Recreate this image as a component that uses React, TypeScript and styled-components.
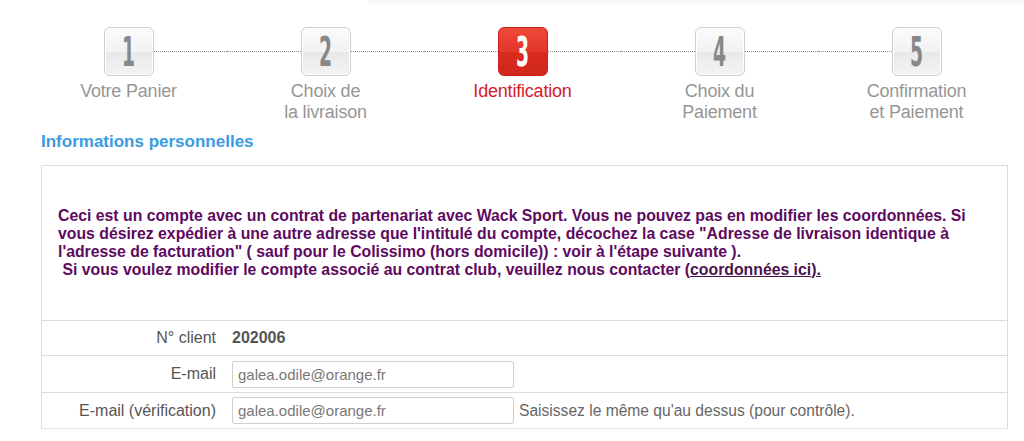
import React from "react";
import styled, { createGlobalStyle } from "styled-components";

const Global = createGlobalStyle`
  html, body { margin: 0; padding: 0; background: #fff; }
  body { font-family: "Liberation Sans", Arial, sans-serif; }
`;

const Page = styled.div`
  width: 1024px;
  height: 441px;
  overflow: hidden;
`;

const TopStrip = styled.div`
  margin-left: 368px;
  height: 4px;
  background: linear-gradient(#f3f3f3, #fafafa);
`;

const Steps = styled.div`
  display: flex;
  padding: 23px 0 0 30px;
`;

const Step = styled.div`
  width: 197px;
  display: flex;
  flex-direction: column;
  align-items: center;
`;

const BoxRow = styled.div`
  width: 100%;
  display: flex;
  align-items: center;
`;

const Connector = styled.div<{ $hidden?: boolean }>`
  flex: 1;
  height: 0;
  border-top: 1px dotted ${(p) => (p.$hidden ? "transparent" : "#8f8f8f")};
`;

const NumBox = styled.div<{ $active?: boolean }>`
  width: 50px;
  height: 49px;
  box-sizing: border-box;
  border-radius: 6px;
  border: 1px solid ${(p) => (p.$active ? "#c8231a" : "#cfcfcf")};
  background: ${(p) =>
    p.$active
      ? "linear-gradient(#ef4a3c 0%, #e2362a 50%, #d92b1e 52%, #d0281c 100%)"
      : "linear-gradient(#fbfbfb 0%, #f2f2f2 50%, #e8e8e8 52%, #f4f4f4 100%)"};
  box-shadow: ${(p) => (p.$active ? "none" : "inset 0 0 0 1px #fff")};
  display: flex;
  align-items: center;
  justify-content: center;
`;

const Num = styled.span<{ $active?: boolean }>`
  font-family: "DejaVu Sans Condensed", "DejaVu Sans", sans-serif;
  font-weight: bold;
  font-size: 40px;
  line-height: 1;
  color: ${(p) => (p.$active ? "#fff" : "#888")};
  transform: scaleX(0.52);
  display: inline-block;
`;

const StepLabel = styled.div<{ $active?: boolean }>`
  margin-top: 5px;
  font-size: 18px;
  line-height: 21px;
  text-align: center;
  letter-spacing: -0.2px;
  color: ${(p) => (p.$active ? "#d4202a" : "#969696")};
`;

const Title = styled.h2`
  margin: 10px 0 0 41px;
  font-size: 17px;
  line-height: 18px;
  font-weight: bold;
  color: #3a9be2;
`;

const Panel = styled.div`
  margin: 14px 0 0 41px;
  width: 967px;
  box-sizing: border-box;
  border: 1px solid #dcdcdc;
  border-bottom-color: #e2e2e2;
`;

const Message = styled.div`
  height: 154px;
  box-sizing: border-box;
  padding: 41px 20px 0 16px;
  font-size: 15.8px;
  line-height: 18px;
  font-weight: bold;
  color: #5e0a5f;
`;

const Link = styled.a`
  color: #4a1350;
  text-decoration: underline;
`;

const Row = styled.div<{ $h: number }>`
  display: flex;
  align-items: center;
  height: ${(p) => p.$h}px;
  border-top: 1px solid #dcdcdc;
`;

const Label = styled.div`
  width: 174px;
  text-align: right;
  font-size: 16px;
  color: #555;
  padding-right: 16px;
  flex-shrink: 0;
`;

const Value = styled.div`
  font-size: 16px;
  font-weight: bold;
  color: #555;
`;

const Input = styled.input`
  width: 282px;
  height: 27px;
  box-sizing: border-box;
  border: 1px solid #cfcfcf;
  border-radius: 2px;
  padding: 0 5px;
  font-family: "Liberation Sans", Arial, sans-serif;
  font-size: 15px;
  color: #777;
  background: #fff;
`;

const Hint = styled.span`
  margin-left: 5px;
  font-size: 15.6px;
  color: #666;
`;

const steps = [
  ["Votre Panier"],
  ["Choix de", "la livraison"],
  ["Identification"],
  ["Choix du", "Paiement"],
  ["Confirmation", "et Paiement"],
];

export default function App() {
  return (
    <Page>
      <Global />
      <TopStrip />
      <Steps>
        {steps.map((lines, i) => {
          const active = i === 2;
          return (
            <Step key={i}>
              <BoxRow>
                <Connector $hidden={i === 0} />
                <NumBox $active={active}>
                  <Num $active={active}>{i + 1}</Num>
                </NumBox>
                <Connector $hidden={i === steps.length - 1} />
              </BoxRow>
              <StepLabel $active={active}>
                {lines.map((l, j) => (
                  <div key={j}>{l}</div>
                ))}
              </StepLabel>
            </Step>
          );
        })}
      </Steps>
      <Title>Informations personnelles</Title>
      <Panel>
        <Message>
          Ceci est un compte avec un contrat de partenariat avec Wack Sport. Vous ne pouvez pas en modifier les coordonnées. Si
          vous désirez expédier à une autre adresse que l'intitulé du compte, décochez la case "Adresse de livraison identique à
          l'adresse de facturation" ( sauf pour le Colissimo (hors domicile)) : voir à l'étape suivante ).
          <br />
          &nbsp;Si vous voulez modifier le compte associé au contrat club, veuillez nous contacter (
          <Link href="#">coordonnées ici</Link>
          <Link href="#">).</Link>
        </Message>
        <Row $h={34}>
          <Label>N° client</Label>
          <Value>202006</Value>
        </Row>
        <Row $h={36}>
          <Label>E-mail</Label>
          <Input defaultValue="galea.odile@orange.fr" />
        </Row>
        <Row $h={35}>
          <Label>E-mail (vérification)</Label>
          <Input defaultValue="galea.odile@orange.fr" />
          <Hint>Saisissez le même qu'au dessus (pour contrôle).</Hint>
        </Row>
      </Panel>
    </Page>
  );
}
